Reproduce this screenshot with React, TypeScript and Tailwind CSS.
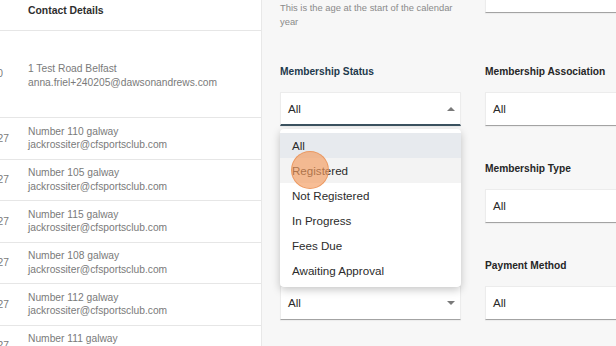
import React from "react";

const rows = [
  { addr: "Number 110 galway" },
  { addr: "Number 105 galway" },
  { addr: "Number 115 galway" },
  { addr: "Number 108 galway" },
  { addr: "Number 112 galway" },
  { addr: "Number 111 galway" },
];

function Arrow({ up }: { up?: boolean }) {
  return (
    <svg width="8" height="4" viewBox="0 0 8 4" className="shrink-0">
      {up ? <polygon points="0,4 8,4 4,0" fill="#7a7a7a" /> : <polygon points="0,0 8,0 4,4" fill="#7a7a7a" />}
    </svg>
  );
}

function Box({ focused, arrow, up, hidden }: { focused?: boolean; arrow?: boolean; up?: boolean; hidden?: boolean }) {
  return (
    <div
      className={
        "h-[34px] bg-white border border-[#ececec] flex items-center justify-between pl-[7px] pr-[5px] shadow-[0_1px_1px_rgba(0,0,0,0.04)] " +
        (focused ? "border-b-2 border-b-[#3b5260]" : "border-b-[#a3a3a3]")
      }
    >
      <span className={"text-[11.6px] text-[#2a2a2a] font-medium " + (hidden ? "invisible" : "")}>All</span>
      {arrow && <Arrow up={up} />}
    </div>
  );
}

function Label({ text, accent, hidden }: { text: string; accent?: boolean; hidden?: boolean }) {
  return (
    <div
      className={
        "h-[14px] leading-[14px] mb-[13px] text-[10.2px] font-bold whitespace-nowrap " +
        (accent ? "text-[#1e3a4c]" : "text-[#262626]") +
        (hidden ? " invisible" : "")
      }
    >
      {text}
    </div>
  );
}

export default function App() {
  return (
    <div
      className="w-[616px] h-[346px] overflow-hidden flex relative bg-white"
      style={{ fontFamily: '"Liberation Sans", Arial, sans-serif' }}
    >
      {/* Left table */}
      <div className="w-[262px] shrink-0 bg-white border-r border-[#e8e8e8] overflow-hidden">
        <div className="h-[31px] border-b border-[#e6e6e6] flex items-start pt-[4px]">
          <div className="w-[28px] shrink-0" />
          <div className="text-[10.4px] leading-[14px] font-bold text-[#2e2e2e] whitespace-nowrap">Contact Details</div>
        </div>
        <div className="h-[87px] border-b border-[#e6e6e6] flex items-center">
          <div className="w-[28px] shrink-0 flex justify-end pr-[25px] text-[10.25px] text-[#7a7a7a] whitespace-nowrap">
            30
          </div>
          <div className="text-[10.25px] leading-[14px] text-[#7a7a7a] whitespace-nowrap pt-[3px]">
            <div>1 Test Road Belfast</div>
            <div>anna.friel+240205@dawsonandrews.com</div>
          </div>
        </div>
        {rows.map((r, i) => (
          <div key={i} className="h-[41.5px] border-b border-[#e6e6e6] flex items-center">
            <div className="w-[28px] shrink-0 flex justify-end pr-[19px] text-[10.25px] text-[#7a7a7a] whitespace-nowrap">
              27
            </div>
            <div className="text-[10.25px] leading-[13.5px] text-[#7a7a7a] whitespace-nowrap">
              <div>{r.addr}</div>
              <div>jackrossiter@cfsportsclub.com</div>
            </div>
          </div>
        ))}
      </div>

      {/* Right filter panel */}
      <div className="flex-1 bg-[#f7f7f7] relative pl-[18px] overflow-hidden">
        <div className="flex gap-x-[24px]">
          <div className="w-[181px] shrink-0 flex flex-col">
            <div className="pt-[1px] text-[9.4px] leading-[14px] text-[#8a8a8a]">
              This is the age at the start of the calendar year
            </div>
            <div className="mt-[36px]">
              <Label text="Membership Status" accent />
              <Box focused arrow up />
            </div>
            <div className="mt-[36px]">
              <Label text="Gender" hidden />
              <Box arrow hidden />
            </div>
            <div className="mt-[36px]">
              <Label text="Age Group" hidden />
              <Box arrow />
            </div>
          </div>
          <div className="w-[181px] shrink-0 flex flex-col">
            <div className="mt-[-21px]">
              <Box hidden />
            </div>
            <div className="mt-[52px]">
              <Label text="Membership Association" />
              <Box />
            </div>
            <div className="mt-[36px]">
              <Label text="Membership Type" />
              <Box />
            </div>
            <div className="mt-[36px]">
              <Label text="Payment Method" />
              <Box />
            </div>
          </div>
        </div>

        {/* Dropdown menu */}
        <div className="absolute left-[18px] top-[129px] w-[181px] bg-white rounded-[4px] py-[4px] shadow-[0_3px_8px_rgba(0,0,0,0.22)]">
          {["All", "Registered", "Not Registered", "In Progress", "Fees Due", "Awaiting Approval"].map((t, i) => (
            <div
              key={t}
              className={
                "h-[25px] pl-[12px] flex items-center text-[11.6px] text-[#2b2b2b] " +
                (i === 0 ? "bg-[#e7eaee]" : i === 1 ? "bg-[#f3f3f3]" : "")
              }
            >
              {t}
            </div>
          ))}
        </div>

        {/* Click indicator */}
        <div className="absolute left-[29px] top-[151px] w-[38px] h-[38px] rounded-full bg-[#f39a5c]/65 border border-[#e88a4c]/70" />
      </div>
    </div>
  );
}
